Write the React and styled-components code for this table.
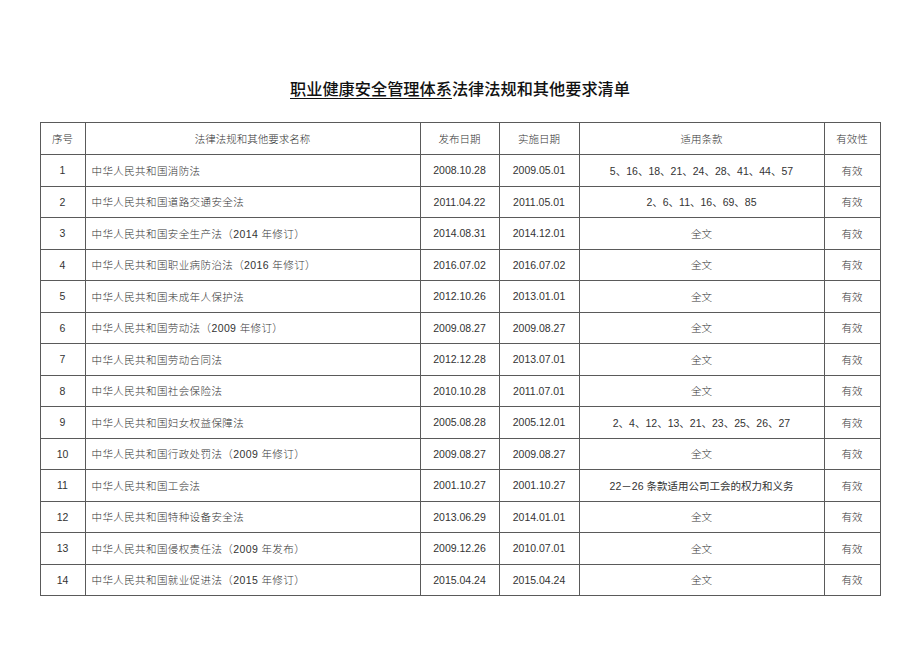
import React from "react";
import styled, { createGlobalStyle } from "styled-components";

const rows = [
  ["1", "中华人民共和国消防法", "2008.10.28", "2009.05.01", "5、16、18、21、24、28、41、44、57"],
  ["2", "中华人民共和国道路交通安全法", "2011.04.22", "2011.05.01", "2、6、11、16、69、85"],
  ["3", "中华人民共和国安全生产法（2014 年修订）", "2014.08.31", "2014.12.01", "全文"],
  ["4", "中华人民共和国职业病防治法（2016 年修订）", "2016.07.02", "2016.07.02", "全文"],
  ["5", "中华人民共和国未成年人保护法", "2012.10.26", "2013.01.01", "全文"],
  ["6", "中华人民共和国劳动法（2009 年修订）", "2009.08.27", "2009.08.27", "全文"],
  ["7", "中华人民共和国劳动合同法", "2012.12.28", "2013.07.01", "全文"],
  ["8", "中华人民共和国社会保险法", "2010.10.28", "2011.07.01", "全文"],
  ["9", "中华人民共和国妇女权益保障法", "2005.08.28", "2005.12.01", "2、4、12、13、21、23、25、26、27"],
  ["10", "中华人民共和国行政处罚法（2009 年修订）", "2009.08.27", "2009.08.27", "全文"],
  ["11", "中华人民共和国工会法", "2001.10.27", "2001.10.27", "22－26 条款适用公司工会的权力和义务"],
  ["12", "中华人民共和国特种设备安全法", "2013.06.29", "2014.01.01", "全文"],
  ["13", "中华人民共和国侵权责任法（2009 年发布）", "2009.12.26", "2010.07.01", "全文"],
  ["14", "中华人民共和国就业促进法（2015 年修订）", "2015.04.24", "2015.04.24", "全文"],
];

const GlobalStyle = createGlobalStyle`
  html, body {
    margin: 0;
    padding: 0;
    background: #ffffff;
  }
`;

const Page = styled.div`
  width: 920px;
  height: 651px;
  display: flex;
  flex-direction: column;
  align-items: center;
  padding-top: 78px;
  box-sizing: border-box;
  font-family: "Liberation Sans", "Noto Sans CJK SC", sans-serif;
  color: #333;
`;

const Title = styled.h1`
  margin: 0 0 23px 0;
  font-family: "Noto Sans CJK SC", sans-serif;
  font-size: 16.2px;
  font-weight: 500;
  color: #111;
  line-height: 21px;
`;

const Underlined = styled.span`
  text-decoration: underline;
  text-underline-offset: 3px;
  text-decoration-thickness: 1px;
`;

const Table = styled.table`
  width: 840px;
  border-collapse: collapse;
  table-layout: fixed;
`;

const Row = styled.tr`
  height: ${(p) => (p.$head ? "32px" : "31.5px")};
`;

const Cell = styled.td`
  border: 1px solid #5a5a5a;
  padding: 0 6px;
  font-size: 10.5px;
  font-family: ${(p) =>
    p.$cjk
      ? '"Noto Sans CJK SC", sans-serif'
      : '"Liberation Sans", "Noto Sans CJK SC", sans-serif'};
  font-weight: ${(p) => (p.$cjk ? 300 : 400)};
  text-align: ${(p) => (p.$left ? "left" : "center")};
  color: #333;
  white-space: nowrap;
  overflow: hidden;
`;

const HeadCell = styled.th`
  border: 1px solid #5a5a5a;
  padding: 0;
  font-family: "Noto Sans CJK SC", sans-serif;
  font-size: 10.5px;
  font-weight: 300;
  color: #333;
  text-align: center;
`;

// name column mixes CJK with numbers
const Name = styled.span`
  font-family: "Liberation Sans", "Noto Sans CJK SC", sans-serif;
  font-weight: 300;
  letter-spacing: 0.4px;
`;

const widths = [45, 335, 79, 80, 245, 56];

export default function App() {
  return (
    <Page>
      <GlobalStyle />
      <Title>
        <Underlined>职业健康安全管理体系</Underlined>法律法规和其他要求清单
      </Title>
      <Table>
        <colgroup>
          {widths.map((w, i) => (
            <col key={i} style={{ width: w }} />
          ))}
        </colgroup>
        <thead>
          <Row $head>
            <HeadCell>序号</HeadCell>
            <HeadCell>法律法规和其他要求名称</HeadCell>
            <HeadCell>发布日期</HeadCell>
            <HeadCell>实施日期</HeadCell>
            <HeadCell>适用条款</HeadCell>
            <HeadCell>有效性</HeadCell>
          </Row>
        </thead>
        <tbody>
          {rows.map((r) => (
            <Row key={r[0]}>
              <Cell>{r[0]}</Cell>
              <Cell $left>
                <Name>{r[1]}</Name>
              </Cell>
              <Cell>{r[2]}</Cell>
              <Cell>{r[3]}</Cell>
              <Cell $cjk={r[4] === "全文"}>{r[4]}</Cell>
              <Cell $cjk>有效</Cell>
            </Row>
          ))}
        </tbody>
      </Table>
    </Page>
  );
}
